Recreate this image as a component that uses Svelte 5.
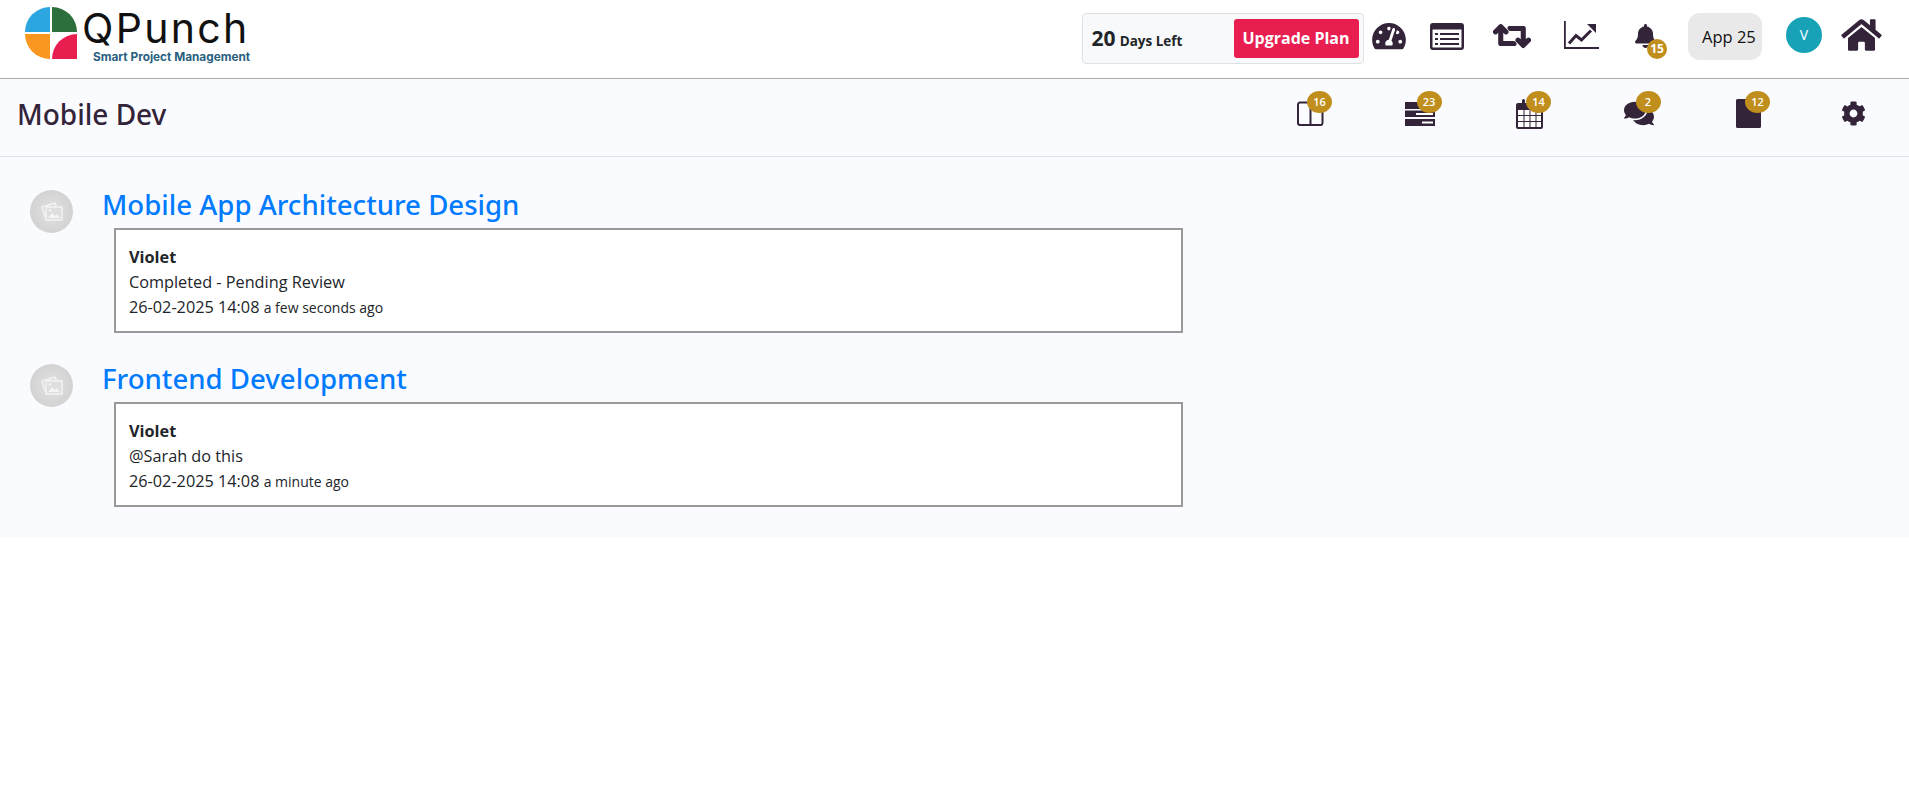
<script>
    const activities = [
        { task: 'Mobile App Architecture Design', user: 'Violet', text: 'Completed - Pending Review', date: '26-02-2025 14:08', ago: 'a few seconds ago' },
        { task: 'Frontend Development', user: 'Violet', text: '@Sarah do this', date: '26-02-2025 14:08', ago: 'a minute ago' }
    ];
</script>

<header class="topbar">
    <div class="logo">
        <svg class="logo-mark" viewBox="0 0 52 52" width="52" height="52">
            <path d="M25 0V25H0A25 25 0 0 1 25 0Z" fill="#2ba6e0" />
            <path d="M27 0A25 25 0 0 1 52 25H27Z" fill="#2c6e3c" />
            <path d="M0 27H25V52A25 25 0 0 1 0 27Z" fill="#f99720" />
            <path d="M52 27V52H27A25 25 0 0 1 52 27Z" fill="#e91e50" />
        </svg>
        <div class="logo-text">
            <span class="logo-name">QPunch</span>
            <span class="logo-sub">Smart Project Management</span>
        </div>
    </div>

    <div class="top-right">
        <div class="trial">
            <span class="days"><b>20</b> <small>Days Left</small></span>
            <button class="upgrade">Upgrade Plan</button>
        </div>

        <svg class="ic gauge" viewBox="0 0 576 512" width="34" height="30"><path d="M288 32C128.94 32 0 160.94 0 320c0 52.8 14.25 102.26 39.06 144.8 5.61 9.62 16.3 15.2 27.44 15.2h443c11.14 0 21.83-5.58 27.44-15.2C561.75 422.26 576 372.8 576 320c0-159.06-128.94-288-288-288zm0 64c14.71 0 26.58 10.13 30.32 23.65-1.11 2.26-2.64 4.23-3.45 6.67l-9.22 27.67c-5.13 3.49-10.97 6.01-17.64 6.01-17.67 0-32-14.33-32-32S270.33 96 288 96zM96 384c-17.67 0-32-14.33-32-32s14.33-32 32-32 32 14.33 32 32-14.33 32-32 32zm48-160c-17.67 0-32-14.33-32-32s14.33-32 32-32 32 14.33 32 32-14.33 32-32 32zm246.77-72.41l-61.33 184C343.13 347.33 352 364.54 352 384c0 11.72-3.38 22.55-8.88 32H232.88c-5.5-9.45-8.88-20.28-8.88-32 0-33.94 26.5-61.43 59.9-63.59l61.34-184.01c4.17-12.56 17.73-19.45 30.36-15.17 12.57 4.19 19.35 17.79 15.17 30.36zm14.66 57.2l15.52-46.55c3.47-1.29 7.13-2.23 11.05-2.23 17.67 0 32 14.33 32 32s-14.33 32-32 32c-11.38-.01-20.89-6.28-26.57-15.22zM480 384c-17.67 0-32-14.33-32-32s14.33-32 32-32 32 14.33 32 32-14.33 32-32 32z" /></svg>

        <svg class="ic list" viewBox="0 0 34 27" width="34" height="27">
            <path fill-rule="evenodd" d="M3 0H31A3 3 0 0 1 34 3V24A3 3 0 0 1 31 27H3A3 3 0 0 1 0 24V3A3 3 0 0 1 3 0ZM2.500 6.500V24.500H31.500V6.500Z" />
            <path d="M5 10h3v2H5zM10 10h19v2H10zM5 15h3v2H5zM10 15h19v2H10zM5 20h3v2H5zM10 20h19v2H10z" />
        </svg>

        <svg class="ic retweet" viewBox="0 0 640 512" width="38" height="30"><path stroke="#33243a" stroke-width="22" d="M629.657 343.598L528.971 444.284c-9.373 9.372-24.568 9.372-33.941 0L394.343 343.598c-9.373-9.373-9.373-24.569 0-33.941l10.823-10.823c9.562-9.562 25.133-9.34 34.419.492L480 342.118V160H292.451a24.005 24.005 0 0 1-16.971-7.029l-16-16C244.361 121.851 255.069 96 276.451 96H520c13.255 0 24 10.745 24 24v222.118l40.416-43.792c9.285-9.831 24.856-10.054 34.419-.492l10.823 10.823c9.372 9.372 9.372 24.569-.001 33.941zm-265.138 15.431A23.999 23.999 0 0 0 347.548 352H160V169.881l40.416 43.792c9.286 9.831 24.856 10.054 34.419.491l10.822-10.822c9.373-9.373 9.373-24.569 0-33.941L144.971 67.716c-9.373-9.373-24.569-9.373-33.941 0L10.343 168.402c-9.373 9.373-9.373 24.569 0 33.941l10.822 10.822c9.562 9.562 25.133 9.34 34.419-.491L96 169.881V392c0 13.255 10.745 24 24 24h243.549c21.382 0 32.09-25.851 16.971-40.971l-16.001-16z" /></svg>

        <svg class="ic chart" viewBox="0 0 36 28" width="36" height="28">
            <path d="M0 0H1.800V26H35V28H0Z" />
            <path d="M5 22.500L12 14.500L17.500 19L27 9.500" fill="none" stroke="#33243a" stroke-width="3" />
            <path d="M23 3H32V12Z" />
        </svg>

        <div class="bell-wrap">
            <svg class="ic" viewBox="0 0 448 512" width="21" height="24"><path d="M224 512c35.32 0 63.97-28.65 63.97-64H160.03c0 35.35 28.65 64 63.97 64zm215.39-149.71c-19.32-20.76-55.47-51.99-55.47-154.29 0-77.7-54.48-139.9-127.94-155.16V32c0-17.67-14.32-32-31.98-32s-31.98 14.33-31.98 32v20.84C118.56 68.1 64.08 130.3 64.08 208c0 102.3-36.15 133.53-55.47 154.29-6 6.45-8.66 14.16-8.61 21.71.11 16.4 12.98 32 32.1 32h383.8c19.12 0 32-15.6 32.1-32 .05-7.55-2.61-15.27-8.61-21.71z" /></svg>
            <span class="bell-count">15</span>
        </div>

        <div class="app-chip">App 25</div>
        <div class="avatar">V</div>

        <svg class="ic home" viewBox="0 0 576 512" width="41" height="36"><path d="M280.37 148.26L96 300.11V464a16 16 0 0 0 16 16l112.06-.29a16 16 0 0 0 15.92-16V368a16 16 0 0 1 16-16h64a16 16 0 0 1 16 16v95.64a16 16 0 0 0 16 16.05L464 480a16 16 0 0 0 16-16V300L295.67 148.26a12.19 12.19 0 0 0-15.3 0zM571.6 251.47L488 182.56V44.05a12 12 0 0 0-12-12h-56a12 12 0 0 0-12 12v72.61L318.47 43a48 48 0 0 0-61 0L4.34 251.47a12 12 0 0 0-1.6 16.9l25.5 31A12 12 0 0 0 45.15 301l235.22-193.74a12.19 12.19 0 0 1 15.3 0L530.9 301a12 12 0 0 0 16.9-1.6l25.5-31a12 12 0 0 0-1.7-16.93z" /></svg>
    </div>
</header>

<div class="subbar">
    <h1>Mobile Dev</h1>
    <nav class="tabs">
        <div class="tab">
            <svg class="ic" viewBox="0 0 27 25" width="27" height="25">
                <path fill="none" stroke="#33243a" stroke-width="2" d="M3 1.500H24A2 2 0 0 1 25.500 3.500V22A2 2 0 0 1 24 24H3A2 2 0 0 1 1 22V3.500A2 2 0 0 1 3 1.500ZM13.500 2V24" />
            </svg>
            <span class="badge">16</span>
        </div>
        <div class="tab">
            <svg class="ic" viewBox="0 0 30 24" width="30" height="24">
                <path d="M0 0H30V7H0ZM0 8.500H30V15H0ZM0 17H30V24H0Z" />
                <path fill="#fff" d="M11 11H28V13H11ZM17 19.500H28V21.500H17Z" />
            </svg>
            <span class="badge">23</span>
        </div>
        <div class="tab">
            <svg class="ic" viewBox="0 0 27 30" width="27" height="30">
                <path d="M2 4H6V1.500A1.500 1.500 0 0 1 9 1.500V4H25A2 2 0 0 1 27 6V28A2 2 0 0 1 25 30H2A2 2 0 0 1 0 28V6A2 2 0 0 1 2 4Z" />
                <path fill="#fff" d="M2 11H7.500V16H2ZM8.500 11H13.500V16H8.500ZM14.500 11H19.500V16H14.500ZM20.500 11H25V16H20.500ZM2 17H7.500V22H2ZM8.500 17H13.500V22H8.500ZM14.500 17H19.500V22H14.500ZM20.500 17H25V22H20.500ZM2 23H7.500V28H2ZM8.500 23H13.500V28H8.500ZM14.500 23H19.500V28H14.500ZM20.500 23H25V28H20.500Z" />
            </svg>
            <span class="badge">14</span>
        </div>
        <div class="tab">
            <svg class="ic" viewBox="0 0 576 512" width="30" height="27"><path d="M416 192c0-88.400-93.100-160-208-160S0 103.600 0 192c0 34.300 14.100 65.900 38 92-13.400 30.200-35.500 54.200-35.800 54.500-2.200 2.300-2.800 5.700-1.500 8.700S4.800 352 8 352c36.600 0 66.900-12.300 88.700-25 32.200 15.700 70.300 25 111.300 25 114.900 0 208-71.600 208-160zm122 220c23.900-26 38-57.700 38-92 0-66.900-53.500-124.200-129.300-148.100.9 6.600 1.300 13.300 1.300 20.100 0 105.900-107.700 192-240 192-10.800 0-21.300-.8-31.700-1.900C207.800 439.600 281.800 480 368 480c41 0 79.100-9.200 111.300-25 21.800 12.700 52.100 25 88.700 25 3.200 0 6.100-1.900 7.300-4.800 1.300-2.900.7-6.300-1.500-8.700-.3-.3-22.400-24.200-35.800-54.500z" /></svg>
            <span class="badge">2</span>
        </div>
        <div class="tab">
            <svg class="ic" viewBox="0 0 25 29" width="25" height="29"><path d="M1.500 0H23.500A1.500 1.500 0 0 1 25 1.500V27.500A1.500 1.500 0 0 1 23.500 29H1.500A1.500 1.500 0 0 1 0 27.500V1.500A1.500 1.500 0 0 1 1.500 0Z" /></svg>
            <span class="badge">12</span>
        </div>
        <div class="tab">
            <svg class="ic" viewBox="0 0 512 512" width="25" height="25"><path d="M487.400 315.700l-42.600-24.600c4.300-23.200 4.300-47 0-70.200l42.600-24.600c4.900-2.800 7.100-8.600 5.500-14-11.100-35.600-30-67.800-54.700-94.600-3.800-4.100-10-5.100-14.800-2.300L380.800 110c-17.900-15.400-38.500-27.300-60.800-35.100V25.800c0-5.600-3.900-10.500-9.400-11.700-36.700-8.200-74.300-7.800-109.200 0-5.500 1.200-9.400 6.100-9.400 11.700V75c-22.200 7.900-42.800 19.800-60.800 35.100L88.700 85.500c-4.900-2.800-11-1.900-14.800 2.300-24.700 26.700-43.600 58.900-54.700 94.600-1.700 5.400.6 11.200 5.500 14L67.300 221c-4.300 23.200-4.300 47 0 70.200l-42.600 24.600c-4.900 2.800-7.100 8.600-5.500 14 11.100 35.600 30 67.800 54.700 94.600 3.800 4.100 10 5.100 14.800 2.300l42.600-24.600c17.900 15.400 38.500 27.300 60.800 35.100v49.200c0 5.600 3.900 10.500 9.400 11.700 36.700 8.200 74.300 7.800 109.200 0 5.500-1.200 9.400-6.100 9.400-11.700v-49.200c22.200-7.900 42.800-19.800 60.800-35.100l42.600 24.600c4.900 2.800 11 1.900 14.800-2.300 24.700-26.700 43.600-58.900 54.700-94.600 1.500-5.500-.7-11.300-5.600-14.100zM256 336c-44.100 0-80-35.900-80-80s35.900-80 80-80 80 35.900 80 80-35.900 80-80 80z" /></svg>
        </div>
    </nav>
</div>

<main class="feed">
    {#each activities as item}
        <section class="entry">
            <div class="thumb">
                <svg viewBox="0 0 22 19" width="22" height="19" fill="none" stroke="#f4f4f4" stroke-width="1.400">
                    <path d="M4.500 16L1 5L14 1L15.200 4" />
                    <path d="M5 5H21V18H5Z" fill="#dedede" />
                    <path d="M7 16L11 11L14 14L16 12L19 16Z" fill="#f4f4f4" stroke="none" />
                    <circle cx="9" cy="8.500" r="1.300" fill="#f4f4f4" stroke="none" />
                </svg>
            </div>
            <div class="body">
                <a class="task" href="#top">{item.task}</a>
                <div class="card">
                    <div class="user">{item.user}</div>
                    <div class="text">{item.text}</div>
                    <div class="stamp">{item.date} <small>{item.ago}</small></div>
                </div>
            </div>
        </section>
    {/each}
</main>

<style>
    :global(body) {
        margin: 0;
        background: #fff;
        font-family: "Open Sans", "Noto Sans", sans-serif;
        color: #212529;
    }

    .ic {
        display: block;
        flex: none;
        fill: #33243a;
    }

    .topbar {
        height: 79px;
        box-sizing: border-box;
        display: flex;
        justify-content: space-between;
        align-items: center;
        padding: 0 27px 0 25px;
        background: #fff;
        border-bottom: 1.500px solid #a9a9a9;
    }

    .logo {
        display: flex;
        align-items: flex-start;
        margin-bottom: 8px;
    }

    .logo-text {
        display: flex;
        flex-direction: column;
        margin-left: 5px;
    }

    .logo-name {
        font-family: Inter, sans-serif;
        font-size: 41px;
        font-weight: 400;
        letter-spacing: 2.300px;
        line-height: 38px;
        padding-top: 2px;
        color: #111;
    }

    .logo-sub {
        font-family: Inter, sans-serif;
        font-size: 11.800px;
        font-weight: 700;
        line-height: 13px;
        color: #2a5f7f;
        margin: 4px 0 0 11px;
    }

    .top-right {
        display: flex;
        align-items: center;
    }

    .trial {
        width: 282px;
        height: 51px;
        box-sizing: border-box;
        display: flex;
        justify-content: space-between;
        align-items: center;
        padding: 0 4px 0 9px;
        background: #f8f9fa;
        border: 1px solid #dee2e6;
        border-radius: 4px;
        margin: 0 8px 2px 0;
    }

    .days b {
        font-size: 21px;
        font-weight: 700;
    }

    .days small {
        font-size: 13.500px;
        font-weight: 700;
    }

    .upgrade {
        width: 125px;
        height: 39px;
        background: #e91e50;
        color: #fff;
        border: none;
        border-radius: 3px;
        font-family: inherit;
        font-size: 16px;
        font-weight: 700;
        padding: 0;
    }

    .gauge { margin-bottom: 6px; }
    .list { margin: 0 0 5px 24px; }
    .retweet { margin: 0 0 6px 29px; }
    .chart { margin: 0 0 8px 33.500px; }

    .bell-wrap {
        position: relative;
        margin: 0 0 7px 35px;
    }

    .bell-count {
        position: absolute;
        left: 12px;
        top: 15px;
        width: 20px;
        height: 20px;
        border-radius: 50%;
        background: #c08e1c;
        color: #fff;
        font-size: 12px;
        font-weight: 700;
        line-height: 20px;
        text-align: center;
    }

    .app-chip {
        width: 74px;
        height: 47px;
        margin: 0 0 5px 32px;
        box-sizing: border-box;
        padding-left: 14px;
        background: #e9e9e9;
        border-radius: 12px;
        font-size: 16.500px;
        line-height: 47px;
        color: #111;
    }

    .avatar {
        width: 36px;
        height: 36px;
        margin: 0 0 9px 24px;
        border-radius: 50%;
        background: #17a2b8;
        color: #fff;
        font-size: 14px;
        line-height: 36px;
        text-align: center;
    }

    .home { margin: 0 0 9px 19px; }

    .subbar {
        height: 78px;
        box-sizing: border-box;
        display: flex;
        justify-content: space-between;
        align-items: center;
        padding: 0 0 8px 17px;
        background: #fafbff;
        border-bottom: 1px solid #dfe2ea;
    }

    h1 {
        margin: 0;
        font-family: "Noto Sans", sans-serif;
        font-size: 28px;
        font-weight: 500;
        color: #33243a;
    }

    .tabs {
        display: grid;
        grid-template-columns: repeat(4, 109.500px) 108px 103px;
        margin-right: 4px;
    }

    .tab {
        position: relative;
        display: flex;
        justify-content: center;
        align-items: center;
        height: 40px;
    }

    .badge {
        position: absolute;
        left: 51px;
        top: -3px;
        width: 25px;
        height: 22px;
        border-radius: 50%;
        background: #c08e1c;
        color: #fff;
        font-size: 11px;
        font-weight: 600;
        line-height: 22px;
        text-align: center;
    }

    .feed {
        background: #fafbff;
        padding: 31px 30px 30px;
        display: flex;
        flex-direction: column;
        gap: 29px;
    }

    .entry {
        display: flex;
        align-items: flex-start;
    }

    .thumb {
        width: 43px;
        height: 43px;
        margin-top: 2px;
        flex: none;
        display: flex;
        justify-content: center;
        align-items: center;
        border-radius: 50%;
        background: radial-gradient(circle, #e2e2e2, #cccccc);
    }

    .body {
        margin-left: 29px;
    }

    .task {
        display: block;
        margin-top: -2px;
        font-family: "Noto Sans", sans-serif;
        font-size: 27.600px;
        font-weight: 500;
        line-height: 36px;
        color: #007bff;
        text-decoration: none;
    }

    .card {
        width: 1069px;
        height: 105px;
        box-sizing: border-box;
        margin: 6px 0 0 12px;
        padding: 15px 13px;
        background: #fff;
        border: 2px solid #999;
        font-size: 16.250px;
        line-height: 25px;
        color: #212529;
    }

    .user {
        font-weight: 700;
    }

    .stamp small {
        font-size: 14px;
    }
</style>
